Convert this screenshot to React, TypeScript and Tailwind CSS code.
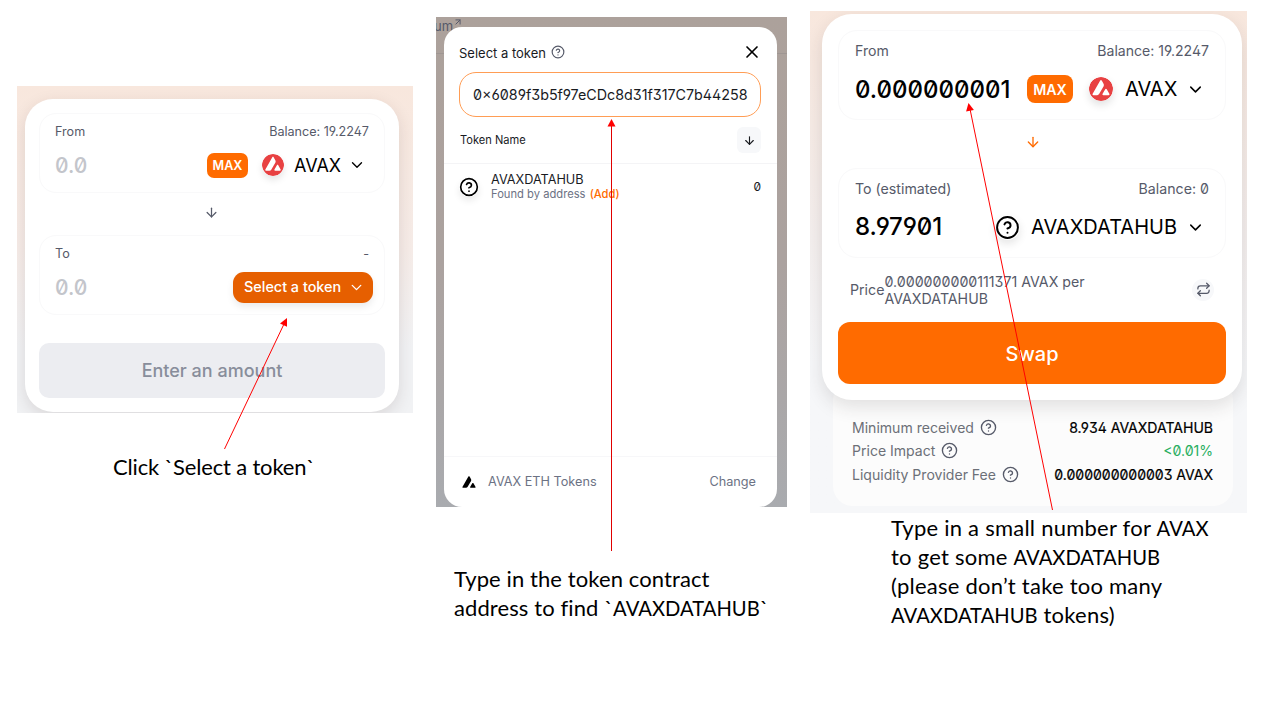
import type { ReactNode } from "react";
import { ArrowDown, ArrowUpRight, ChevronDown, CircleHelp, Repeat, X } from "lucide-react";

const AVALANCHE =
  "M171.8 130.3c4.4-7.6 11.5-7.6 15.9 0l27.4 48.1c4.4 7.6.8 13.8-8 13.8h-55.2c-8.7 0-12.3-6.2-8-13.8l27.9-48.1zM118.8 37.7c4.4-7.6 11.4-7.6 15.8 0l6.1 11 14.4 25.3c3.5 7.2 3.5 15.7 0 22.9l-48.3 83.7c-4.4 6.8-11.7 11.1-19.8 11.6H46.9c-8.8 0-12.4-6.1-8-13.8L118.8 37.7z";

function AvaxLogo({ className }: { className: string }) {
  return (
    <svg viewBox="0 0 254 254" className={className}>
      <circle cx="127" cy="127" r="127" fill="#e84142" />
      <path d={AVALANCHE} fill="#fff" />
    </svg>
  );
}

function Caption({ lines, className }: { lines: string[]; className: string }) {
  return (
    <div
      className={`[font-family:Lato,sans-serif] whitespace-nowrap text-[22px] leading-[29px] text-black ${className}`}
    >
      {lines.map((line) => (
        <p key={line} className="h-[29px]">
          {line.split(/(AVAXDATAHUB|AVAX)/).map((part, i) =>
            part.startsWith("AVAX") ? (
              <span key={i} className="text-[20.2px] tracking-normal">
                {part}
              </span>
            ) : (
              part
            ),
          )}
        </p>
      ))}
    </div>
  );
}

function SelectStep() {
  return (
    <section className="ml-[17px] mt-[86px] w-[396px] shrink-0">
      <div className="h-[327px] overflow-hidden bg-linear-to-b from-[#f8e7dd] via-[#f6ece8] via-50% to-[#f1f2f4] to-80% pl-2 pt-[13px]">
        <div className="h-[313px] w-[374px] rounded-[28px] bg-white px-[14px] pt-[14px] shadow-[0_5px_16px_rgba(60,40,40,0.13)]">
          <div className="h-[80px] rounded-[17px] border border-[#f9f9fa] px-[15px] pt-[9px]">
            <div className="flex h-[18px] items-center justify-between text-[12.6px] text-[#565a69]">
              <span>From</span>
              <span>Balance: 19.2247</span>
            </div>
            <div className="mt-[8px] flex h-[32px] items-center">
              <span className="flex-1 pt-[2px] text-[21px] font-medium text-[#c3c5cb]">0.0</span>
              <span className="flex h-[25px] w-[41px] items-center justify-center rounded-[7px] bg-[#ff6b00] pt-[2px] text-[12.6px] font-semibold text-white">
                MAX
              </span>
              <AvaxLogo className="ml-[14px] size-[22px] rounded-full shadow-[0_4px_7px_rgba(0,0,0,0.1)]" />
              <span className="ml-[10px] w-[47px] text-[18px] text-black">AVAX</span>
              <ChevronDown className="ml-[7px] mr-[3px] size-[18px]" strokeWidth={1.8} />
            </div>
          </div>
          <div className="flex h-[42px] items-start justify-center pr-px pt-[12px]">
            <ArrowDown className="size-[15px] text-[#565a69]" strokeWidth={2} />
          </div>
          <div className="h-[80px] rounded-[17px] border border-[#f9f9fa] px-[15px] pt-[9px]">
            <div className="flex h-[18px] items-center justify-between text-[12.6px] text-[#565a69]">
              <span>To</span>
              <span>-</span>
            </div>
            <div className="mt-[8px] flex h-[32px] items-center">
              <span className="flex-1 pt-[2px] text-[21px] font-medium text-[#c3c5cb]">0.0</span>
              <span className="-mr-[4px] flex h-[31px] w-[140px] items-center rounded-[11px] bg-[#e65f00] pl-[11px] text-[14.4px] font-medium text-white shadow-[0_4px_7px_rgba(0,0,0,0.08)]">
                Select a token
                <ChevronDown className="ml-[7px] size-[17px]" strokeWidth={1.9} />
              </span>
            </div>
          </div>
          <div className="mt-[28px] flex h-[55px] items-center justify-center rounded-[10px] bg-[#ecedf1] text-[18px] font-medium text-[#888d9b]">
            Enter an amount
          </div>
        </div>
      </div>
      <Caption
        className="ml-[96px] mt-[39px] tracking-[-0.17px]"
        lines={["Click `Select a token`"]}
      />
    </section>
  );
}

function SearchStep() {
  return (
    <section className="ml-[23px] mt-[17px] w-[351px] shrink-0">
      <div className="relative h-[490px] overflow-hidden bg-linear-to-b from-[#aca19b] via-[#aba29f] via-50% to-[#a9abaf] pl-2 pt-[10px]">
        <div className="absolute left-0 top-0 flex h-[37px] w-full items-start border-b border-[#9f9693] text-[13px] leading-[18px] text-[#565a69]">
          <span className="-ml-[2px]">um</span>
          <ArrowUpRight className="size-[10px]" strokeWidth={2.4} />
        </div>
        <div className="relative flex h-[480px] w-[333px] flex-col rounded-[18px] bg-white">
          <div className="flex h-[45px] items-center pl-[15px] pr-[15px] pt-[7px]">
            <span className="pt-px text-[13px] text-[#191b1f]">Select a token</span>
            <CircleHelp className="mb-[3px] ml-[5px] size-[14px] text-[#565a69]" strokeWidth={2} />
            <X className="mb-[2px] ml-auto size-[20px] text-black" strokeWidth={2} />
          </div>
          <div className="ml-[15px] flex h-[45px] w-[302px] items-center whitespace-nowrap rounded-[17px] border border-[#ff9d55] pl-[13px] pt-px text-[14.3px] text-[#191b1f]">
            0×6089f3b5f97eCDc8d31f317C7b44258
          </div>
          <div className="flex h-[47px] items-center justify-between border-b border-[#f4f4f6] px-[16px]">
            <span className="pt-px text-[11.1px] text-[#191b1f]">Token Name</span>
            <span className="flex h-[26px] w-[24px] items-center justify-center rounded-[6px] bg-[#f7f8fa]">
              <ArrowDown className="size-[13px] text-[#191b1f]" strokeWidth={2.1} />
            </span>
          </div>
          <div className="flex h-[45px] items-center pl-[15px] pr-[16px]">
            <CircleHelp
              className="size-[20px] rounded-full text-black shadow-[0_4px_7px_rgba(0,0,0,0.08)]"
              strokeWidth={2}
            />
            <div className="ml-[12px] flex-1">
              <p className="text-[12.7px] leading-[15px] text-[#191b1f]">AVAXDATAHUB</p>
              <p className="text-[11.2px] leading-[14px] text-[#6c7284]">
                Found by address{" "}
                <span className="ml-px font-medium text-[#ff6b00]">(Add)</span>
              </p>
            </div>
            <span className="text-[12px] text-[#191b1f]">0</span>
          </div>
          <div className="mt-auto flex h-[51px] items-center border-t border-[#f7f7f9] pl-[18px] pr-[21px] text-[12.7px] text-[#6c7284]">
            <svg viewBox="35 30 184 164" className="h-[12px] w-[14px]">
              <path d={AVALANCHE} fill="#000" />
            </svg>
            <span className="ml-[12px]">AVAX ETH Tokens</span>
            <span className="ml-auto">Change</span>
          </div>
        </div>
      </div>
      <Caption
        className="ml-[18px] mt-[57px] tracking-[0.1px]"
        lines={["Type in the token contract", "address to find `AVAXDATAHUB`"]}
      />
    </section>
  );
}

function Detail({ label, value, green }: { label: string; value: ReactNode; green?: boolean }) {
  return (
    <div className="flex h-[23.3px] items-center whitespace-nowrap">
      <span className="text-[#6c7078]">{label}</span>
      <CircleHelp className="ml-[6px] size-[17px] text-[#565a69]" strokeWidth={1.9} />
      <span
        className={
          green
            ? "ml-auto text-[#27ae60]"
            : "ml-auto tracking-[-0.02px] text-black [-webkit-text-stroke:0.2px_black]"
        }
      >
        {value}
      </span>
    </div>
  );
}

function SwapStep() {
  return (
    <section className="ml-[23px] mt-[11px] w-[437px] shrink-0">
      <div className="h-[502px] overflow-hidden bg-linear-to-b from-[#f8e7dd] via-[#f4efee] via-45% to-[#f6f7f9] to-70% pl-3 pt-[3px]">
        <div className="relative z-10 h-[386px] w-[420px] rounded-[30px] bg-white px-[16px] pt-[16px] shadow-[0_7px_18px_rgba(50,40,40,0.13)]">
          <div className="h-[90px] rounded-[19px] border border-[#f9f9fa] px-[16px] pt-[10px]">
            <div className="flex h-[20px] items-center justify-between text-[14.1px] text-[#565a69]">
              <span>From</span>
              <span>Balance: 19.2247</span>
            </div>
            <div className="mt-[11px] flex h-[34px] items-center text-black">
              <span className="flex-1 pt-px text-[24px] font-medium">0.000000001</span>
              <span className="flex h-[28px] w-[46px] items-center justify-center rounded-[8px] bg-[#ff6b00] pt-px text-[14.2px] font-semibold text-white">
                MAX
              </span>
              <AvaxLogo className="ml-[16px] size-[24px] rounded-full shadow-[0_4px_8px_rgba(0,0,0,0.12)]" />
              <span className="ml-[12px] w-[53px] text-[20px]">AVAX</span>
              <ChevronDown className="ml-[8px] mr-[4px] size-[19px]" strokeWidth={1.9} />
            </div>
          </div>
          <div className="flex h-[48px] items-start justify-center pl-px pt-[14px]">
            <ArrowDown className="size-[16px] text-[#ff6b00]" strokeWidth={2} />
          </div>
          <div className="h-[90px] rounded-[19px] border border-[#f9f9fa] px-[16px] pt-[10px]">
            <div className="flex h-[20px] items-center justify-between text-[14.2px] text-[#565a69]">
              <span>To (estimated)</span>
              <span>Balance: 0</span>
            </div>
            <div className="mt-[11px] flex h-[34px] items-center text-black">
              <span className="flex-1 text-[24px] font-medium">8.97901</span>
              <CircleHelp
                className="size-[25px] rounded-full shadow-[0_4px_8px_rgba(0,0,0,0.1)]"
                strokeWidth={1.9}
              />
              <span className="ml-[11px] w-[147px] text-[20px]">AVAXDATAHUB</span>
              <ChevronDown className="ml-[8px] mr-[4px] size-[19px]" strokeWidth={1.9} />
            </div>
          </div>
          <div className="flex h-[64px] items-center pb-px pl-[12px] pr-[12px] text-[14.2px] leading-[17px] text-[#565a69]">
            <span>Price</span>
            <span className="w-[220px]">0.000000000111371 AVAX per AVAXDATAHUB</span>
            <span className="ml-auto flex size-[22px] items-center justify-center rounded-full bg-[#f7f8fa]">
              <Repeat className="size-[15px]" strokeWidth={2} />
            </span>
          </div>
          <div className="flex h-[62px] items-center justify-center rounded-[12px] bg-[#ff6b00] pt-[2px] text-[20px] font-medium text-white">
            Swap
          </div>
        </div>
        <div className="-mt-[20px] ml-[11px] h-[126px] w-[400px] rounded-[20px] bg-[#fcfcfc] pl-[19px] pr-[20px] pt-[36px] text-[14.05px]">
          <Detail label="Minimum received" value="8.934 AVAXDATAHUB" />
          <Detail label="Price Impact" value="<0.01%" green />
          <Detail label="Liquidity Provider Fee" value="0.000000000003 AVAX" />
        </div>
      </div>
      <Caption
        className="ml-[81px] tracking-[0.24px]"
        lines={[
          "Type in a small number for AVAX",
          "to get some AVAXDATAHUB",
          "(please don’t take too many",
          "AVAXDATAHUB tokens)",
        ]}
      />
    </section>
  );
}

export default function App() {
  return (
    <main className="relative flex h-[720px] w-[1280px] items-start overflow-hidden bg-white [font-family:Inter,sans-serif] [font-feature-settings:'ss01','zero']">
      <SelectStep />
      <SearchStep />
      <SwapStep />
      <svg
        className="pointer-events-none absolute inset-0 z-20"
        width="1280"
        height="720"
        viewBox="0 0 1280 720"
        stroke="#ff0000"
        strokeWidth="1"
        fill="none"
      >
        <path d="M224.5 449L284 324" />
        <path d="M287 318l-7 5.5 7 3.2z" fill="#ff0000" stroke="none" />
        <path d="M611.5 551V125" stroke="#e00000" />
        <path d="M611.5 119l-4 7.5h8z" fill="#ff0000" stroke="none" />
        <path d="M1052.5 510L970 109" />
        <path d="M968.5 103l-2.4 8.5 7.8-1.6z" fill="#ff0000" stroke="none" />
      </svg>
    </main>
  );
}
